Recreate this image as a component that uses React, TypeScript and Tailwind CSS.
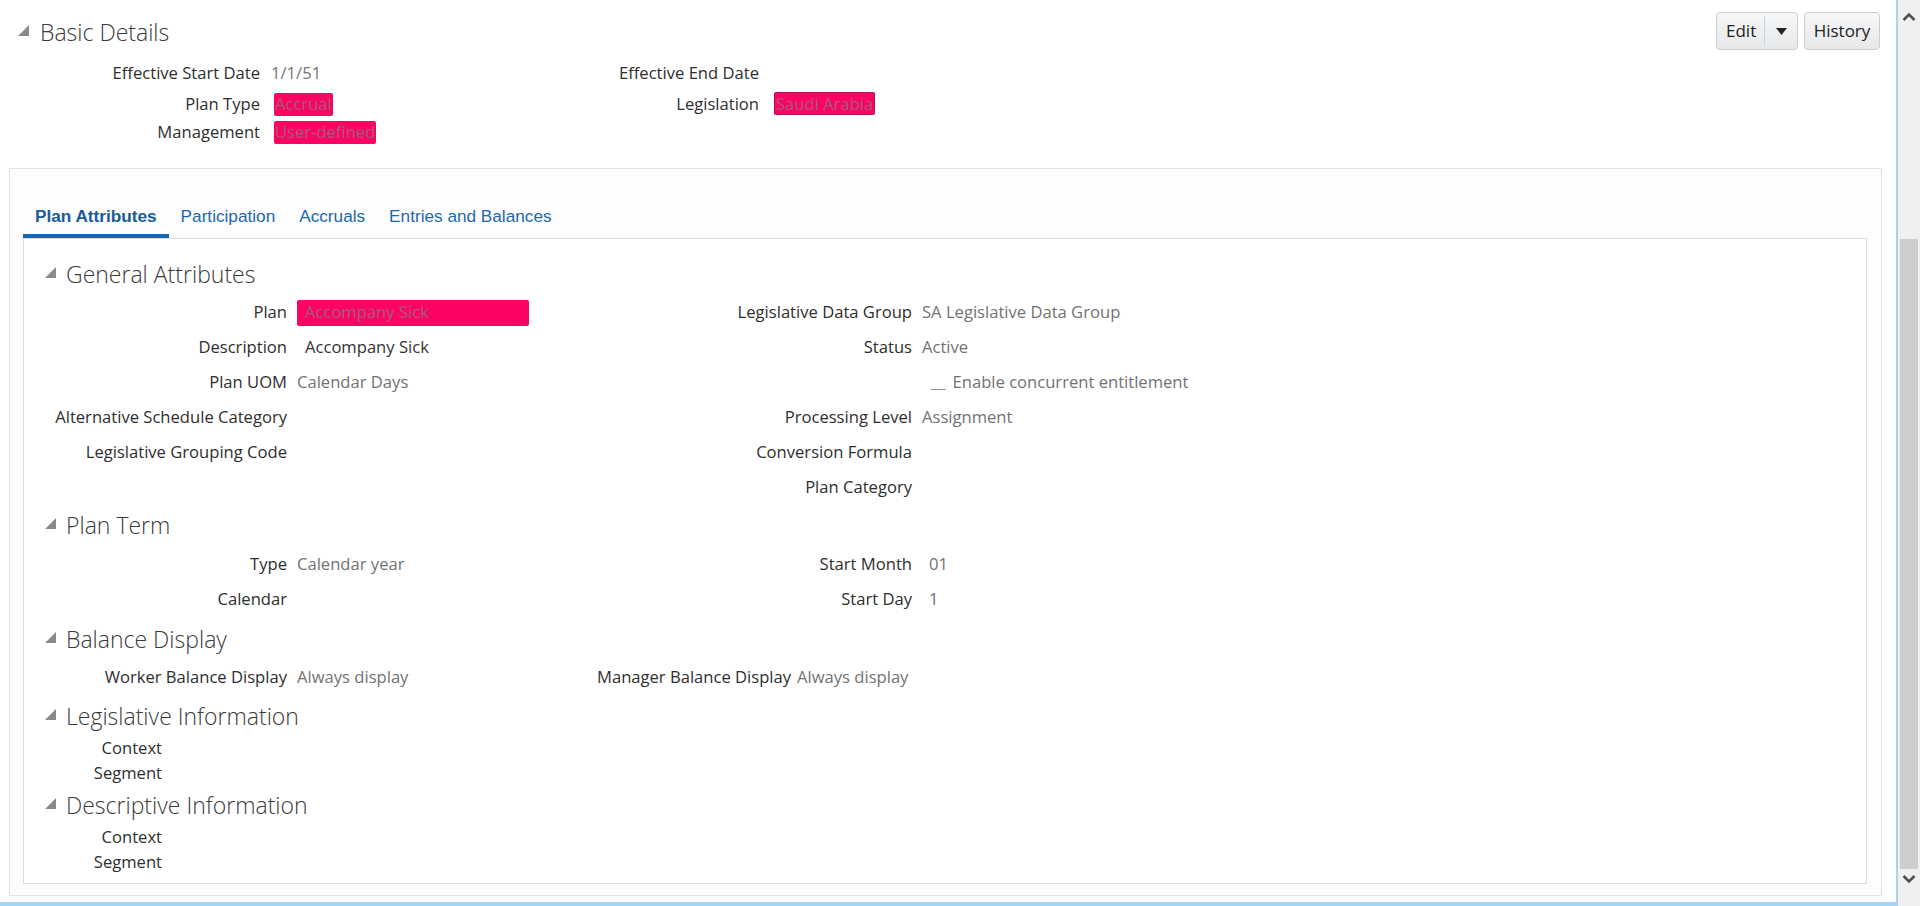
import React from 'react'

const FONT = "font-['Open_Sans',sans-serif]"

function Tri() {
  return (
    <svg width="11" height="11" viewBox="0 0 11 11" className="shrink-0 -mt-[3px]">
      <polygon points="11,0 11,11 0,11" fill="#8a8a8a" />
    </svg>
  )
}

function SectionHead({ title }: { title: string }) {
  return (
    <div className="h-[30px] flex items-center pl-[21px] gap-[10px]">
      <Tri />
      <span className="text-[23px] font-light text-[#3a3a3a] leading-none">{title}</span>
    </div>
  )
}

function Row({ label, lw, children, h = 'h-[35px]', gap = 'ml-[10px]' }: { label: string; lw: string; children?: React.ReactNode; h?: string; gap?: string }) {
  return (
    <div className={`${h} flex items-center`}>
      <div className={`${lw} text-right text-[#2e2e2e] shrink-0 whitespace-nowrap`}>{label}</div>
      <div className={`${gap} text-[#727272] whitespace-nowrap`}>{children}</div>
    </div>
  )
}

function Pink({ children, dotted }: { children: React.ReactNode; dotted?: boolean }) {
  return (
    <span
      className={`inline-block h-[23px] leading-[22px] bg-[#fb0463] text-[#a65a7c] px-[1px] rounded-[2px] ${dotted ? 'border border-dotted border-[#6b2040]' : ''}`}
    >
      {children}
    </span>
  )
}

export default function App() {
  const tabs = ['Plan Attributes', 'Participation', 'Accruals', 'Entries and Balances']

  return (
    <div className={`w-[1920px] h-[906px] flex bg-white overflow-hidden text-[16.6px] ${FONT}`}>
      <div className="w-[1898px] h-[906px] border-r-2 border-b-4 border-[#a5d3f2] flex flex-col">
        {/* header */}
        <div className="flex items-start justify-between pt-[12px] pr-[16px]">
          <div className="mt-[5px] h-[30px] flex items-center pl-[18px] gap-[11px]">
            <Tri />
            <span className="text-[23px] font-light text-[#3a3a3a] leading-none">Basic Details</span>
          </div>
          <div className="flex gap-[6px]">
            <div className="h-[38px] w-[82px] flex items-stretch rounded-[4px] border border-[#c8ced4] bg-gradient-to-b from-[#f6f7f8] to-[#e6e8ea] text-[#222] text-[17px]">
              <span className="flex items-center pl-[9px] pr-[8px]">Edit</span>
              <span className="w-px bg-[#cdd2d7] my-[3px]" />
              <span className="flex-1 flex items-center justify-center">
                <svg width="11" height="7" viewBox="0 0 11 7">
                  <polygon points="0,0 11,0 5.5,7" fill="#222" />
                </svg>
              </span>
            </div>
            <div className="h-[38px] w-[76px] flex items-center justify-center rounded-[4px] border border-[#c8ced4] bg-gradient-to-b from-[#f6f7f8] to-[#e6e8ea] text-[#222] text-[17px]">
              History
            </div>
          </div>
        </div>

        {/* basic fields */}
        <div className="mt-[11px] flex">
          <div className="w-[470px]">
            <div className="h-[24px] flex items-center">
              <div className="w-[260px] text-right text-[#2e2e2e]">Effective Start Date</div>
              <div className="ml-[11px] text-[#777]">1/1/51</div>
            </div>
            <div className="mt-[7px] h-[24px] flex items-center">
              <div className="w-[260px] text-right text-[#2e2e2e]">Plan Type</div>
              <div className="ml-[14px]"><Pink>Accrual</Pink></div>
            </div>
            <div className="mt-[4px] h-[24px] flex items-center">
              <div className="w-[260px] text-right text-[#2e2e2e]">Management</div>
              <div className="ml-[14px]"><Pink>User-defined</Pink></div>
            </div>
          </div>
          <div>
            <div className="h-[24px] flex items-center">
              <div className="w-[289px] text-right text-[#2e2e2e]">Effective End Date</div>
            </div>
            <div className="mt-[7px] h-[24px] flex items-center">
              <div className="w-[289px] text-right text-[#2e2e2e]">Legislation</div>
              <div className="ml-[15px]"><Pink dotted>Saudi Arabia</Pink></div>
            </div>
          </div>
        </div>

        {/* outer card */}
        <div className="mt-[24px] ml-[9px] w-[1873px] h-[728px] border border-[#e2e2e2] bg-[#fdfdfd] pt-[31px] pl-[13px] pr-[14px] pb-[11px] flex flex-col">
          <div className="flex border-b border-[#dcdcdc] font-['Liberation_Sans',Arial,sans-serif] text-[17.2px]">
            {tabs.map((t, i) => (
              <div
                key={t}
                className={`h-[38px] px-[12px] pb-[1px] flex items-center border-b-4 ${
                  i === 0 ? 'border-[#1668b4] text-[#185b9b] font-bold' : 'border-transparent text-[#1c68ad]'
                }`}
              >
                {t}
              </div>
            ))}
          </div>

          <div className="flex-1 border-x border-b border-[#dcdcdc] bg-white pt-[20px]">
            <SectionHead title="General Attributes" />
            <div className="mt-[6px] flex">
              <div className="w-[573px]">
                <Row label="Plan" lw="w-[263px]">
                  <span className="flex items-center w-[232px] h-[26px] bg-[#fb0463] text-[#a65a7c] pl-[8px] rounded-[2px]">
                    Accompany Sick
                  </span>
                </Row>
                <Row label="Description" lw="w-[263px]">
                  <span className="pl-[8px] text-[#333]">Accompany Sick</span>
                </Row>
                <Row label="Plan UOM" lw="w-[263px]">Calendar Days</Row>
                <Row label="Alternative Schedule Category" lw="w-[263px]" />
                <Row label="Legislative Grouping Code" lw="w-[263px]" />
              </div>
              <div>
                <Row label="Legislative Data Group" lw="w-[315px]">SA Legislative Data Group</Row>
                <Row label="Status" lw="w-[315px]">Active</Row>
                <Row label="" lw="w-[315px]">
                  <span className="pl-[9px] text-[#8a8a8a]">__</span>
                  <span className="ml-[7px]">Enable concurrent entitlement</span>
                </Row>
                <Row label="Processing Level" lw="w-[315px]">Assignment</Row>
                <Row label="Conversion Formula" lw="w-[315px]" />
                <Row label="Plan Category" lw="w-[315px]" />
              </div>
            </div>

            <div className="mt-[5px]">
              <SectionHead title="Plan Term" />
            </div>
            <div className="mt-[7px] flex">
              <div className="w-[573px]">
                <Row label="Type" lw="w-[263px]">Calendar year</Row>
                <Row label="Calendar" lw="w-[263px]" />
              </div>
              <div>
                <Row label="Start Month" lw="w-[315px]">
                  <span className="pl-[7px]">01</span>
                </Row>
                <Row label="Start Day" lw="w-[315px]">
                  <span className="pl-[7px]">1</span>
                </Row>
              </div>
            </div>

            <div className="mt-[7px]">
              <SectionHead title="Balance Display" />
            </div>
            <div className="mt-[6px] flex">
              <div className="w-[573px]">
                <Row label="Worker Balance Display" lw="w-[263px]">Always display</Row>
              </div>
              <Row label="Manager Balance Display" lw="w-[189px]" gap="ml-[11px]">Always display</Row>
            </div>

            <div className="mt-[6px]">
              <SectionHead title="Legislative Information" />
            </div>
            <div className="mt-[5px]">
              <Row label="Context" lw="w-[138px]" h="h-[25px]" />
              <Row label="Segment" lw="w-[138px]" h="h-[25px]" />
            </div>

            <div className="mt-[4px]">
              <SectionHead title="Descriptive Information" />
            </div>
            <div className="mt-[5px]">
              <Row label="Context" lw="w-[138px]" h="h-[25px]" />
              <Row label="Segment" lw="w-[138px]" h="h-[25px]" />
            </div>
          </div>
        </div>
      </div>

      {/* scrollbar */}
      <div className="w-[22px] h-[906px] bg-[#f0f0f0] flex flex-col items-center">
        <svg width="14" height="10" viewBox="0 0 14 10" className="mt-[12px]">
          <polyline points="1.5,8 7,2.5 12.5,8" fill="none" stroke="#505050" strokeWidth="2.6" />
        </svg>
        <div className="mt-[217px] w-[18px] h-[630px] bg-[#cdcdcd]" />
        <svg width="14" height="10" viewBox="0 0 14 10" className="mt-[5px]">
          <polyline points="1.5,2 7,7.5 12.5,2" fill="none" stroke="#505050" strokeWidth="2.6" />
        </svg>
      </div>
    </div>
  )
}
